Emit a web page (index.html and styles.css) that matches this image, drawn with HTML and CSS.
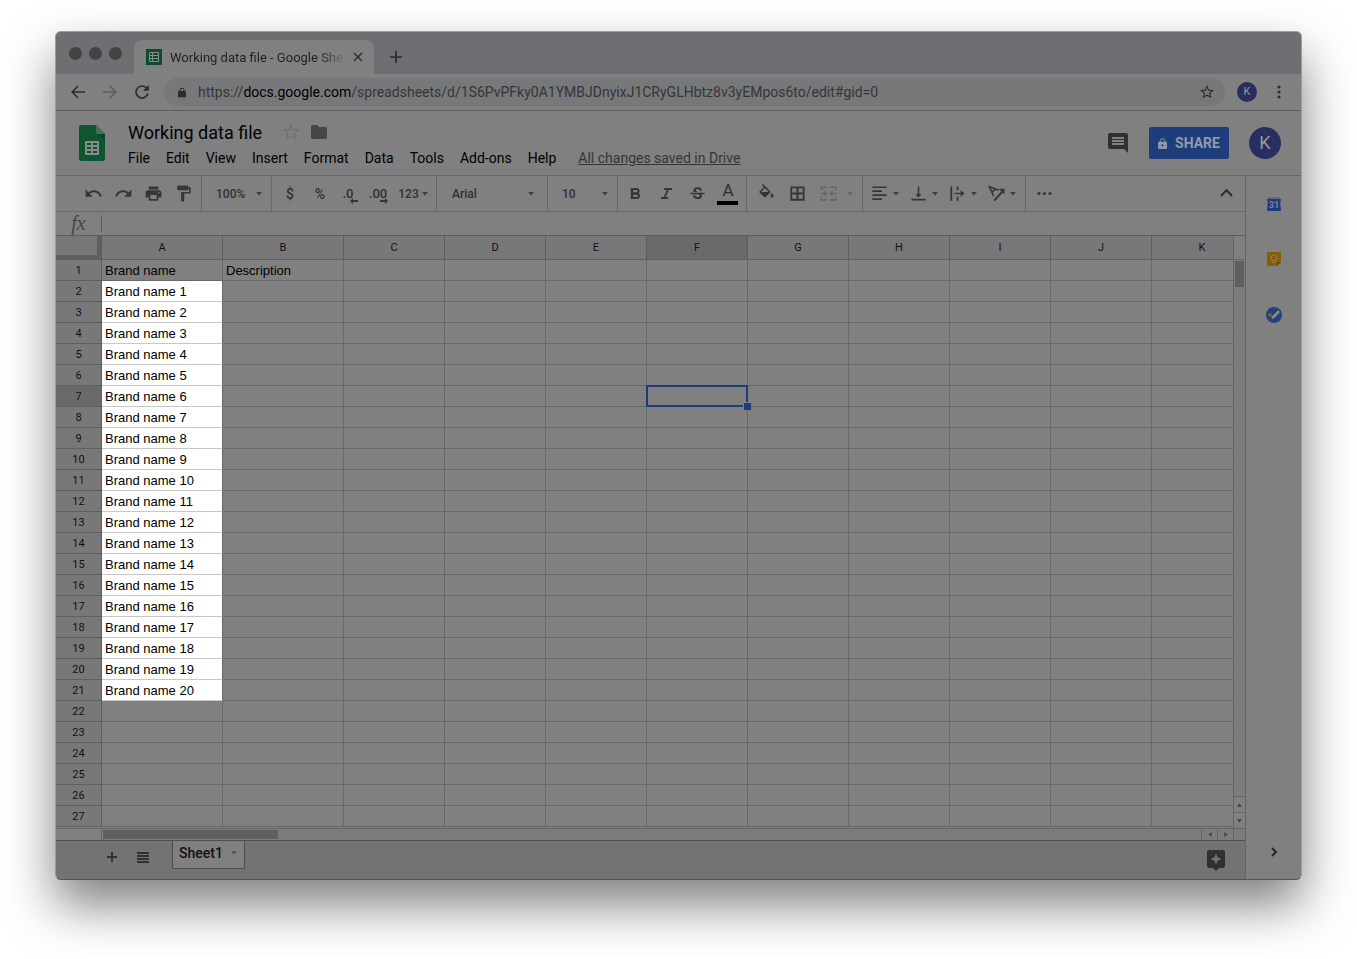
FILE: index.html
```html
<!DOCTYPE html>
<html lang="en">
<head>
<meta charset="utf-8">
<title>Working data file - Google Sheets</title>
<link rel="stylesheet" href="styles.css">
</head>
<body>
<svg class="defs" width="0" height="0" aria-hidden="true">
  <symbol id="arrow" viewBox="0 0 6 4"><path d="M0 0h6L3 3.500z"/></symbol>
</svg>
<div class="window">
  <div class="tabstrip">
    <div class="lights"><i></i><i></i><i></i></div>
    <div class="tab">
      <svg width="16" height="16" viewBox="0 0 16 16"><path fill="#0b4d29" d="M0 0h16v16H0z"/><path fill="none" stroke="#8c8c8c" d="M3.500 3.500h9v9h-9zM3.500 6.500h9M3.500 9.500h9M6.500 3.500v9"/></svg>
      <span class="tab-title">Working data file - Google Sheets</span>
      <button class="plain" aria-label="Close tab"><svg width="10" height="10" viewBox="0 0 10 10"><path d="M1 1l8 8M9 1L1 9" stroke="#2b2c2e" stroke-width="1.500"/></svg></button>
    </div>
    <button class="plain newtab" aria-label="New tab"><svg width="12" height="12" viewBox="0 0 12 12"><path d="M6 0v12M0 6h12" stroke="#2b2c2e" stroke-width="1.700"/></svg></button>
  </div>

  <div class="navbar">
    <button class="plain nav" aria-label="Back"><svg width="14" height="14" viewBox="0 0 14 14" fill="none" stroke="#2b2c2e" stroke-width="1.600"><path d="M14 7H1.500M7 1L1.200 7 7 13"/></svg></button>
    <button class="plain nav" aria-label="Forward"><svg width="14" height="14" viewBox="0 0 14 14" fill="none" stroke="#5c5d5f" stroke-width="1.600"><path d="M0 7h12.500M7 1l5.800 6L7 13"/></svg></button>
    <button class="plain nav" aria-label="Reload"><svg width="14" height="14" viewBox="0 0 14 14"><path d="M11.800 3.300A6 6 0 1 0 12.900 8.500" fill="none" stroke="#2b2c2e" stroke-width="1.700"/><path fill="#2b2c2e" d="M13.800 0v5.800H8z"/></svg></button>
    <div class="omnibox">
      <svg width="8" height="11" viewBox="0 0 10 12"><path fill="#2b2c2e" d="M1 4h8.200q.8 0 .8.800v6.400q0 .8-.8.800H.8q-.8 0-.8-.8V4.800Q0 4 1 4z"/><path d="M2.500 5V3a2.500 2.300 0 0 1 5 0v2" fill="none" stroke="#2b2c2e" stroke-width="1.300"/></svg>
      <div class="url" role="textbox" aria-label="Address">https://<b>docs.google.com</b>/spreadsheets/d/1S6PvPFky0A1YMBJDnyixJ1CRyGLHbtz8v3yEMpos6to/edit#gid=0</div>
      <button class="plain" aria-label="Bookmark"><svg width="14" height="14" viewBox="2 2 20 20"><path fill="#2b2c2e" d="M22 9.240l-7.190-.62L12 2 9.190 8.630 2 9.240l5.460 4.730L5.820 21 12 17.270 18.180 21l-1.630-7.030L22 9.240zM12 15.400l-3.760 2.270 1-4.280-3.320-2.880 4.380-.38L12 6.100l1.710 4.040 4.380.38-3.320 2.880 1 4.280L12 15.400z"/></svg></button>
    </div>
    <button class="avatar small" aria-label="Profile">K</button>
    <button class="plain dots" aria-label="Menu"><svg width="4" height="14" viewBox="0 0 4 14" fill="#2b2c2e"><circle cx="2" cy="2" r="1.600"/><circle cx="2" cy="7" r="1.600"/><circle cx="2" cy="12" r="1.600"/></svg></button>
  </div>

  <header class="dochead">
    <svg class="logo" width="26" height="36" viewBox="0 0 26 36"><path fill="#0f5630" d="M2.500 0H17l9 9v24.500q0 2.500-2.500 2.500h-21Q0 36 0 33.500v-31Q0 0 2.500 0z"/><path fill="#45705a" d="M17 0l9 9h-7q-2 0-2-2z"/><path fill="#0b4526" d="M19 9h7v7z"/><path fill="#898989" fill-rule="evenodd" d="M6 16h14v14H6zM8 18v2h4v-2zM14 18v2h4v-2zM8 22v2h4v-2zM14 22v2h4v-2zM8 26v2h4v-2zM14 26v2h4v-2z"/></svg>
    <div class="doc">
      <div class="titlerow">
        <input class="title" value="Working data file" aria-label="Document name">
        <button class="plain" aria-label="Star"><svg width="16" height="16" viewBox="2 2 20 20"><path fill="#6b6b6b" d="M22 9.240l-7.190-.62L12 2 9.190 8.630 2 9.240l5.460 4.730L5.820 21 12 17.270 18.180 21l-1.630-7.030L22 9.240zM12 16.300l-4.600 2.770 1.220-5.230-4.060-3.520 5.360-.46L12 4.900l2.090 4.940 5.360.46-4.060 3.530 1.220 5.230L12 16.300z"/></svg></button>
        <button class="plain folder" aria-label="Move to folder"><svg width="16" height="14" viewBox="0 0 16 14"><path fill="#464646" d="M1.500 0h4.800L8 2h6.500Q16 2 16 3.500v9q0 1.500-1.500 1.500h-13Q0 14 0 12.500v-11Q0 0 1.500 0z"/></svg></button>
      </div>
      <nav class="menus">
        <button>File</button><button>Edit</button><button>View</button><button>Insert</button><button>Format</button><button>Data</button><button>Tools</button><button>Add-ons</button><button>Help</button>
        <a href="#saved">All changes saved in Drive</a>
      </nav>
    </div>
    <button class="plain" aria-label="Comments"><svg width="20" height="20" viewBox="2 2 20 20"><path fill="#303030" d="M21.990 4c0-1.100-.89-2-1.990-2H4c-1.100 0-2 .9-2 2v12c0 1.100.9 2 2 2h14l4 4-.01-18zM18 14H6v-2h12v2zm0-3H6V9h12v2zm0-3H6V6h12v2z"/></svg></button>
    <button class="share"><svg width="9" height="11" viewBox="0 0 10 12"><path fill="#8c96aa" fill-rule="evenodd" d="M1 4h8q1 0 1 1v6q0 1-1 1H1q-1 0-1-1V5q0-1 1-1zM5 6.800a1.200 1.200 0 1 0 .01 0z"/><path d="M2.500 5V3a2.500 2.400 0 0 1 5 0v2" fill="none" stroke="#8c96aa" stroke-width="1.100"/></svg>SHARE</button>
    <button class="avatar" aria-label="Account">K</button>
  </header>

  <div class="workspace">
    <main class="sheet">
      <div class="toolbar">
        <div class="group g-edit">
          <button class="tool" aria-label="Undo"><svg viewBox="0 0 24 24"><path d="M12.500 8c-2.650 0-5.050.99-6.900 2.600L2 7v9h9l-3.620-3.620c1.390-1.160 3.160-1.880 5.120-1.880 3.540 0 6.550 2.310 7.600 5.500l2.370-.78C21.080 11.030 17.150 8 12.500 8z"/></svg></button>
          <button class="tool" aria-label="Redo"><svg viewBox="0 0 24 24"><path d="M18.400 10.600C16.550 8.990 14.150 8 11.500 8c-4.650 0-8.580 3.030-9.960 7.220L3.900 16c1.050-3.190 4.050-5.500 7.600-5.500 1.950 0 3.730.72 5.120 1.880L13 16h9V7l-3.600 3.600z"/></svg></button>
          <button class="tool" aria-label="Print"><svg viewBox="0 0 24 24"><path d="M19 8H5c-1.660 0-3 1.340-3 3v6h4v4h12v-4h4v-6c0-1.660-1.340-3-3-3zm-3 11H8v-5h8v5zm3-7c-.55 0-1-.45-1-1s.45-1 1-1 1 .45 1 1-.45 1-1 1zm-1-9H6v4h12V3z"/></svg></button>
          <button class="tool" aria-label="Paint format"><svg viewBox="0 0 24 24"><path d="M18 4V3c0-.55-.45-1-1-1H5c-.55 0-1 .45-1 1v4c0 .55.45 1 1 1h12c.55 0 1-.45 1-1V6h1v4H9v11c0 .55.45 1 1 1h2c.55 0 1-.45 1-1v-9h8V4h-3z"/></svg></button>
        </div>
        <div class="group drop"><select aria-label="Zoom"><option>100%</option></select><svg class="ar"><use href="#arrow"/></svg></div>
        <div class="group g-num">
          <button class="tool" aria-label="Currency">$</button>
          <button class="tool" aria-label="Percent">%</button>
          <button class="tool dec" aria-label="Fewer decimals">.0<svg width="8" height="6" viewBox="0 0 8 6"><path d="M0 3l3-3v2h5v2H3v2z"/></svg></button>
          <button class="tool dec" aria-label="More decimals">.00<svg width="8" height="6" viewBox="0 0 8 6"><path d="M8 3L5 0v2H0v2h5v2z"/></svg></button>
          <button class="tool fmt" aria-label="More formats">123<svg class="ar"><use href="#arrow"/></svg></button>
        </div>
        <div class="group drop wide"><select aria-label="Font"><option>Arial</option></select><svg class="ar"><use href="#arrow"/></svg></div>
        <div class="group drop"><select aria-label="Font size"><option>10</option></select><svg class="ar"><use href="#arrow"/></svg></div>
        <div class="group g-text">
          <button class="tool" aria-label="Bold"><svg viewBox="0 0 24 24"><path transform="translate(0 1)" d="M15.600 10.790c.97-.67 1.650-1.770 1.650-2.790 0-2.260-1.750-4-4-4H6v14h8.040c2.090 0 3.710-1.700 3.710-3.790 0-1.520-.86-2.820-2.150-3.420zM9 6.500h4c.83 0 1.500.67 1.500 1.500s-.67 1.500-1.500 1.500H9v-3zm4.500 9H9v-3h4.500c.83 0 1.500.67 1.500 1.500s-.67 1.500-1.500 1.500z"/></svg></button>
          <button class="tool" aria-label="Italic"><svg viewBox="0 0 24 24"><path d="M9 5v2.500h3.400l-4 9H5V19h9v-2.500h-3l4-9h4V5z"/></svg></button>
          <button class="tool" aria-label="Strikethrough"><svg viewBox="0 0 24 24"><path transform="translate(0 1)" d="M7.240 8.750c-.26-.48-.39-1.030-.39-1.670 0-.61.13-1.160.4-1.670.26-.5.63-.93 1.110-1.290.48-.35 1.050-.63 1.700-.83.66-.19 1.390-.29 2.180-.29.81 0 1.540.11 2.210.34.66.22 1.230.54 1.690.94.47.4.83.88 1.080 1.430s.38 1.150.38 1.810h-3.010c0-.31-.05-.59-.15-.85-.09-.27-.24-.49-.44-.68-.2-.19-.45-.33-.75-.44-.3-.1-.66-.16-1.060-.16-.39 0-.74.04-1.030.13s-.53.21-.72.36c-.19.16-.34.34-.44.55-.1.21-.15.43-.15.66 0 .48.25.88.74 1.210.38.25.77.48 1.410.7H7.390c-.05-.08-.11-.17-.15-.25zM21 12v-2H3v2h9.620c.18.07.4.14.55.2.37.17.66.34.87.51s.35.36.43.57c.07.2.11.43.11.69 0 .23-.05.45-.14.66-.09.2-.23.38-.42.53-.19.15-.42.26-.71.35-.29.08-.63.13-1.010.13-.43 0-.83-.04-1.180-.13s-.66-.23-.91-.42c-.25-.19-.45-.44-.59-.75s-.25-.76-.25-1.210H6.400c0 .55.08 1.130.24 1.580s.37.85.65 1.210c.28.35.6.66.98.92.37.26.78.48 1.220.65.44.17.9.3 1.380.39.48.08.96.13 1.440.13.8 0 1.530-.09 2.180-.28s1.210-.45 1.670-.79c.46-.34.82-.77 1.070-1.270s.38-1.070.38-1.710c0-.6-.1-1.140-.31-1.610-.05-.11-.11-.23-.17-.33H21z"/></svg></button>
          <button class="tool color" aria-label="Text color">A</button>
        </div>
        <div class="group g-cell">
          <button class="tool" aria-label="Fill color"><svg viewBox="0 0 24 24"><path d="M16.560 8.940L7.620 0 6.210 1.410l2.380 2.380-5.150 5.150c-.59.59-.59 1.540 0 2.120l5.500 5.500c.29.29.68.44 1.060.44s.77-.15 1.060-.44l5.500-5.500c.59-.58.59-1.530 0-2.120zM5.210 10L10 5.210 14.790 10H5.210zM19 11.500s-2 2.170-2 3.500c0 1.100.9 2 2 2s2-.9 2-2c0-1.330-2-3.500-2-3.500z"/></svg></button>
          <button class="tool" aria-label="Borders"><svg viewBox="0 0 24 24"><path d="M3 3v18h18V3H3zm7.700 15.700H5.300v-5.400h5.400v5.400zm0-8H5.300V5.300h5.400v5.400zm8 8h-5.400v-5.400h5.400v5.400zm0-8h-5.400V5.300h5.400v5.400z"/></svg></button>
          <button class="tool off" aria-label="Merge cells" disabled><svg viewBox="0 0 24 24"><path d="M2 3h8v2H4v3H2zM14 3h8v5h-2V5h-6zM2 16h2v3h6v2H2zM20 16h2v5h-8v-2h6zM2 11h5V8l4 4-4 4v-3H2zM22 11h-5V8l-4 4 4 4v-3h5z"/></svg></button>
          <svg class="ar off"><use href="#arrow"/></svg>
        </div>
        <div class="group g-align">
          <button class="tool pair" aria-label="Horizontal align"><svg viewBox="0 0 24 24"><path d="M3 3h18v2.200H3zM3 7.900h12v2.200H3zM3 12.900h18v2.200H3zM3 18h12v2.200H3z"/></svg><svg class="ar"><use href="#arrow"/></svg></button>
          <button class="tool pair" aria-label="Vertical align"><svg viewBox="0 0 24 24"><path d="M16 13h-3V3h-2v10H8l4 4 4-4zM3 18.500v2.300h18v-2.300H3z"/></svg><svg class="ar"><use href="#arrow"/></svg></button>
          <button class="tool pair" aria-label="Text wrapping"><svg viewBox="0 0 24 24"><path d="M3 3h2.300v18H3zM11 3h2.300v5H11zM11 16h2.300v5H11zM8 11h8V8l5 4-5 4v-3H8z"/></svg><svg class="ar"><use href="#arrow"/></svg></button>
          <button class="tool pair" aria-label="Text rotation"><svg viewBox="0 0 24 24"><path fill="none" stroke="#363636" stroke-width="2" d="M15 8L3 3.500l5.500 12M6 10.500l5-4.500"/><path fill="none" stroke="#363636" stroke-width="2.600" d="M9 21L20 9"/><path d="M15 6h7v7z"/></svg><svg class="ar"><use href="#arrow"/></svg></button>
        </div>
        <button class="tool more" aria-label="More"><svg viewBox="0 0 24 24"><circle cx="5" cy="12" r="2"/><circle cx="12" cy="12" r="2"/><circle cx="19" cy="12" r="2"/></svg></button>
        <button class="tool hide" aria-label="Hide menus"><svg viewBox="0 0 24 24"><path fill="none" stroke="#303030" stroke-width="2.700" d="M5 15l7-7 7 7"/></svg></button>
      </div>

      <div class="formula">
        <label for="fx">fx</label>
        <input id="fx" type="text">
      </div>

      <div class="gridarea">
        <div class="gridclip"><table class="grid" id="grid"></table></div>
        <div class="vbar">
          <div class="vhead"></div>
          <div class="vtrack"><div class="vthumb"></div></div>
          <button class="step" aria-label="Scroll up"><svg width="5" height="4" viewBox="0 0 6 4"><path d="M0 4h6L3 0z"/></svg></button>
          <button class="step" aria-label="Scroll down"><svg width="5" height="4" viewBox="0 0 6 4"><path d="M0 0h6L3 4z"/></svg></button>
        </div>
      </div>

      <div class="hbar">
        <div class="hpad"></div>
        <div class="htrack"><div class="hthumb"></div></div>
        <button class="hstep" aria-label="Scroll left"><svg width="4" height="5" viewBox="0 0 4 6"><path d="M4 0v6L0 3z"/></svg></button>
        <button class="hstep" aria-label="Scroll right"><svg width="4" height="5" viewBox="0 0 4 6"><path d="M0 0v6l4-3z"/></svg></button>
        <div class="hend"></div>
      </div>

      <footer class="sheets">
        <button class="plain" aria-label="Add sheet"><svg width="10" height="10" viewBox="0 0 10 10"><path d="M5 0v10M0 5h10" stroke="#303030" stroke-width="1.800"/></svg></button>
        <button class="plain" aria-label="All sheets"><svg width="12" height="11" viewBox="0 0 12 11"><path fill="#303030" d="M0 0h12v2H0zM0 3h12v2H0zM0 6h12v2H0zM0 9h12v2H0z"/></svg></button>
        <button class="sheettab">Sheet1<svg class="ar"><use href="#arrow"/></svg></button>
        <button class="plain explore" aria-label="Explore"><svg width="18" height="21" viewBox="0 0 18 21"><path fill="#303030" fill-rule="evenodd" d="M2 0h14q2 0 2 2v14q0 2-2 2h-4l-3 3-3-3H2q-2 0-2-2V2q0-2 2-2zM9 3.500L7.300 7.300 3.500 9l3.800 1.700L9 14.500l1.700-3.800L14.500 9l-3.800-1.700z"/></svg></button>
      </footer>
    </main>

    <aside class="side">
      <button class="plain" aria-label="Calendar"><svg width="14" height="14" viewBox="0 0 14 14"><path fill="#686868" d="M1 0h12v3H1z"/><path fill="#1d3d7d" d="M0 2h14l-.7 4 .7 8H0l.7-8z"/><text x="7" y="11" class="cal">31</text></svg></button>
      <button class="plain" aria-label="Keep"><svg width="14" height="14" viewBox="0 0 14 14"><path fill="#845d04" d="M1 0h12q1 0 1 1v9l-4 4H1q-1 0-1-1V1q0-1 1-1z"/><path fill="#6b4b00" d="M14 10l-4 4v-4z"/><path fill="none" stroke="#93866a" d="M5.500 8.500l-.8-1.500a2.700 2.700 0 1 1 4.600 0l-.8 1.500zM5.500 10.500h3"/></svg></button>
      <button class="plain" aria-label="Tasks"><svg width="16" height="16" viewBox="0 0 16 16"><circle cx="8" cy="8" r="8" fill="#21427a"/><path d="M6.800 10.500l5.500-5.500" stroke="#8c8c8c" stroke-width="2.600" stroke-linecap="round"/><circle cx="4" cy="8" r="1.800" fill="#8a6a0a"/></svg></button>
      <button class="plain chev" aria-label="Hide side panel"><svg width="6" height="10" viewBox="0 0 6 10"><path d="M1 1l4 4-4 4" fill="none" stroke="#222" stroke-width="1.800"/></svg></button>
    </aside>
  </div>
</div>
<script src="grid.js"></script>
</body>
</html>
```

FILE: grid.js
```js
const columns = "ABCDEFGHIJK".split("");
const rowCount = 27;
const selected = { col: "F", row: 7 };

const values = { A1: "Brand name", B1: "Description" };
for (let n = 1; n <= 20; n++) values["A" + (n + 1)] = "Brand name " + n;

const widths = columns.map(c => `<col class="${c < "C" ? "col-wide" : "col-std"}">`).join("");
let html = `<colgroup><col class="col-num">${widths}</colgroup><thead><tr><th class="corner"></th>`;
for (const c of columns) html += `<th scope="col"${c === selected.col ? ' class="active"' : ""}>${c}</th>`;
html += "</tr></thead><tbody>";
for (let r = 1; r <= rowCount; r++) {
  html += `<tr><th scope="row"${r === selected.row ? ' class="active"' : ""}>${r}</th>`;
  for (const c of columns) {
    const lit = c === "A" && r >= 2 && r <= 21;
    const sel = c === selected.col && r === selected.row;
    html += `<td class="${lit ? "lit" : sel ? "sel" : ""}">${values[c + r] || ""}${sel ? '<div class="cursor"><i></i></div>' : ""}</td>`;
  }
  html += "</tr>";
}
document.getElementById("grid").innerHTML = html + "</tbody>";
```

FILE: styles.css
```css
* { box-sizing: border-box; }

body {
  margin: 0;
  min-height: 100vh;
  padding: 31px 55px 79px;
  background: #fff;
  font-family: Roboto, "Liberation Sans", sans-serif;
  font-size: 14px;
  color: #000;
}

button, input, select { font: inherit; color: inherit; background: none; border: 0; padding: 0; margin: 0; }
button { cursor: pointer; }
svg { display: block; flex: none; }
.defs { position: absolute; }
.plain { display: flex; align-items: center; justify-content: center; }
.ar { width: 6px; height: 4px; fill: #404040; }

.window {
  border: 1px solid #9c9c9c;
  border-bottom-color: #555;
  border-radius: 6px;
  background: #808080;
  overflow: hidden;
  box-shadow: 0 25px 50px rgba(0, 0, 0, .5);
}

/* browser chrome */
.tabstrip { display: flex; height: 42px; background: #6d6f73; padding-left: 13px; }
.lights { display: flex; gap: 7px; padding: 15px 12px 0 0; }
.lights i { width: 13px; height: 13px; border-radius: 50%; background: #434344; }
.tab {
  display: flex; align-items: center; align-self: flex-end;
  width: 240px; height: 34px; padding: 0 11px 0 12px;
  border-radius: 8px 8px 0 0; background: #808080;
}
.tab-title {
  flex: 1; min-width: 0; margin: 0 10px 0 8px; overflow: hidden; white-space: nowrap;
  font-size: 13px; color: #1f2022;
  mask-image: linear-gradient(to right, #000 150px, transparent 176px);
}
.newtab { width: 44px; padding-top: 8px; }

.navbar { display: flex; align-items: center; height: 37px; padding: 0 20px 0 6px; border-bottom: 1px solid #5e5e5e; }
.nav { width: 32px; height: 32px; }
.omnibox {
  display: flex; align-items: center; flex: 1; min-width: 0; height: 28px;
  margin: 0 12px 0 6px; padding: 0 11px 0 14px; border-radius: 14px; background: #77787a;
}
.url { flex: 1; min-width: 0; margin-left: 12px; overflow: hidden; white-space: nowrap; font-size: 14px; color: #343537; }
.url b { font-weight: 400; color: #000; }
.avatar {
  width: 32px; height: 32px; border-radius: 50%; background: #282f5f; color: #999; font-size: 18px; line-height: 32px;
}
.avatar.small { width: 20px; height: 20px; font-size: 11px; line-height: 20px; }
.dots { margin-left: 20px; }

/* document header */
.dochead { display: flex; align-items: center; height: 65px; padding: 0 20px 0 23px; border-bottom: 1px solid #666; }
.doc { flex: 1; min-width: 0; margin-left: 22px; padding-top: 4px; }
.titlerow { display: flex; align-items: center; height: 26px; }
.title { width: 146px; height: 24px; margin-right: 10px; padding: 0 0 0 1px; font-size: 18px; }
.folder { margin-left: 12px; }
.menus { display: flex; gap: 16px; height: 26px; align-items: center; padding: 0 0 0 1px; white-space: nowrap; }
.menus a { color: #363636; margin-left: 6px; }
.share {
  display: flex; align-items: center; justify-content: center; gap: 8px;
  width: 80px; height: 32px; margin: 0 20px 0 21px;
  border-radius: 2px; background: #1f3d7a; color: #8f9aaf; font-weight: 700;
}

/* workspace */
.workspace { display: flex; }
.sheet { flex: 1; min-width: 0; }
.side { display: flex; flex-direction: column; align-items: center; width: 56px; padding: 21px 0 22px; gap: 41px; border-left: 1px solid #656565; }
.chev { margin-top: auto; }
.cal { font-size: 9px; font-weight: 700; text-anchor: middle; fill: #7683a0; }

.toolbar { display: flex; height: 36px; border-bottom: 1px solid #696969; color: #303030; }
.group { display: flex; align-items: center; flex: none; border-right: 1px solid #676767; }
.tool { display: flex; align-items: center; justify-content: center; width: 30px; height: 34px; font-size: 14px; font-weight: 500; }
.tool svg { width: 19px; height: 19px; fill: #363636; }
.tool .ar, .drop .ar { width: 6px; height: 4px; fill: #404040; }
.tool.off svg, .ar.off { fill: #666; }
.g-edit { padding: 0 3px 0 22px; }
.drop { width: 70px; padding: 0 9px 0 14px; font-size: 12px; font-weight: 500; }
.drop.wide { width: 111px; padding: 0 13px 0 15px; }
.drop select { appearance: none; flex: 1; min-width: 0; outline: 0; }
.g-num { padding: 0 5px 0 3px; }
.g-num .tool.dec { position: relative; padding-right: 4px; font-size: 13px; }
.tool.dec svg { position: absolute; right: 7px; bottom: 7px; width: 8px; height: 6px; }
.g-num .fmt { width: 36px; gap: 3px; font-size: 12px; }
.g-text { gap: 1px; padding: 0 3px 0 2px; }
.tool.color { position: relative; padding-bottom: 7px; font-size: 17px; font-weight: 400; }
.tool.color::after { content: ""; position: absolute; left: 4px; right: 5px; bottom: 6px; height: 4px; background: #000; }
.g-cell { gap: 1px; padding: 0 9px 0 4px; }
.g-cell > .ar { margin-left: 3px; }
.g-align { gap: 5px; padding: 0 7px 0 4px; }
.pair { width: 34px; gap: 4px; }
.more { margin-left: 3px; }
.hide { margin: 0 4px 0 auto; }

.formula { display: flex; align-items: center; height: 24px; border-bottom: 1px solid #5c5c5c; }
.formula label { width: 45px; text-align: center; font: italic 20px "Liberation Serif", serif; color: #444; }
.formula input { flex: 1; height: 17px; border-left: 1px solid #5c5c5c; outline: 0; padding: 0 8px; }

/* grid */
.gridarea { display: flex; height: 592px; }
.gridclip { flex: 1; min-width: 0; overflow: hidden; border-right: 1px solid #666; }
.grid { width: 1177px; table-layout: fixed; border-collapse: separate; border-spacing: 0; font-family: "Liberation Sans", Arial, sans-serif; font-size: 13px; }
.col-num { width: 46px; }
.col-wide { width: 121px; }
.col-std { width: 101px; }
.grid th { padding: 0; background: #787878; border: solid #5e5e5e; border-width: 0 1px 1px 0; font-family: Roboto, sans-serif; font-size: 11px; font-weight: 400; color: #111; }
.grid thead th { height: 24px; }
.grid tbody th { height: 21px; }
.grid th.active { background: #6a6a6a; }
.grid th.corner { border-width: 0 5px 5px 0; }
.grid td { height: 21px; padding: 2px 3px 0; border: solid #686868; border-width: 0 1px 1px 0; line-height: 18px; white-space: nowrap; }
.grid td.lit { background: #fff; background-clip: padding-box; border-bottom-color: #c8c8c8; }
.grid td.sel { position: relative; z-index: 1; }
.cursor { position: absolute; inset: -1px; border: 2px solid #1d3d7d; }
.cursor i { position: absolute; right: -5px; bottom: -5px; width: 8px; height: 8px; border: solid #808080; border-width: 1px 0 0 1px; background: #1d3d7d; }

.vbar { display: flex; flex-direction: column; width: 11px; }
.vhead { height: 24px; border-bottom: 1px solid #666; }
.vtrack { flex: 1; padding: 1px; background: #7c7c7c; }
.vthumb { height: 26px; background: #5f5f5f; }
.step, .hstep { display: flex; align-items: center; justify-content: center; }
.step { height: 16px; border-top: 1px solid #666; }
.step svg, .hstep svg { fill: #444; }
.hbar { display: flex; height: 13px; border: solid #666; border-width: 1px 0; border-bottom-color: #505050; background: #7c7c7c; }
.hpad { width: 46px; border-right: 1px solid #666; background: #808080; }
.htrack { flex: 1; padding: 1px; }
.hthumb { width: 175px; height: 9px; background: #5f5f5f; }
.hstep { width: 16px; border-left: 1px solid #666; }
.hend { width: 12px; border-left: 1px solid #666; }

.sheets { display: flex; align-items: center; height: 38px; padding: 0 20px 6px 51px; background: #737373; }
.sheets .plain { margin-right: 20px; }
.sheettab {
  display: flex; align-items: center; align-self: flex-start; gap: 8px;
  height: 28px; margin-left: 3px; padding: 0 7px 4px 6px; background: #808080;
  border: solid #4c4c4c; border-width: 0 1px 1px; border-radius: 0 0 2px 2px; font-weight: 500; color: #111;
}
.sheettab .ar { fill: #555; }
.sheets .explore { margin: 6px 0 0 auto; }
```
